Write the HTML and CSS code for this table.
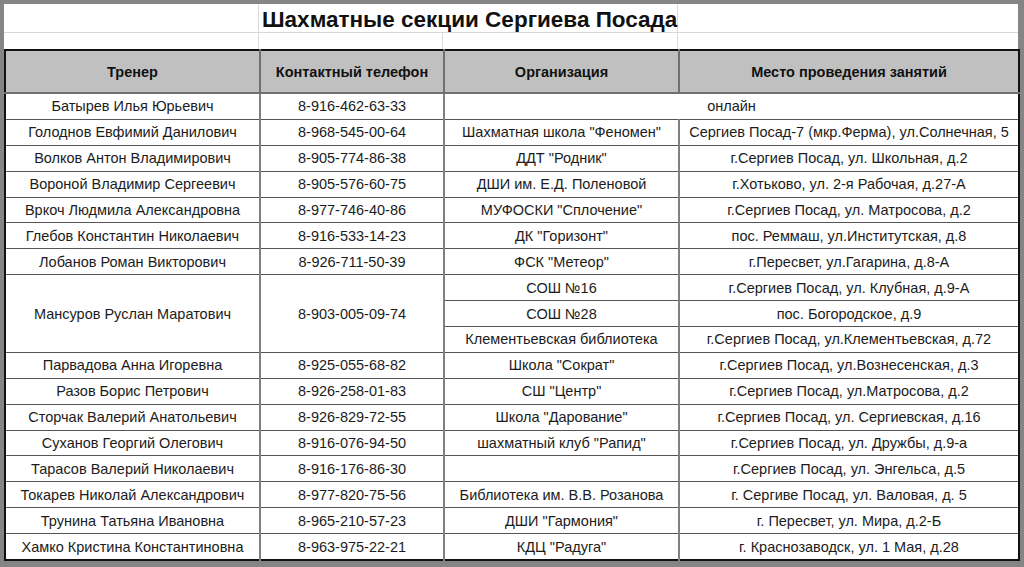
FILE: index.html
```html
<!DOCTYPE html>
<html lang="ru">
<head>
<meta charset="utf-8">
<title>Шахматные секции Сергиева Посада</title>
<link rel="stylesheet" href="styles.css">
</head>
<body>
<div class="frame">
  <div class="sheet">
    <div class="top">
      <div class="tcell a"></div>
      <div class="tcell title">Шахматные секции Сергиева Посада</div>
      <div class="tcell d"></div>
      <div class="gcell a"></div>
      <div class="gcell b"></div>
      <div class="gcell c"></div>
      <div class="gcell d"></div>
    </div>
    <table class="grid">
      <colgroup>
        <col class="w1"><col class="w2"><col class="w3"><col class="w4">
      </colgroup>
      <thead>
        <tr><th>Тренер</th><th>Контактный телефон</th><th>Организация</th><th>Место проведения занятий</th></tr>
      </thead>
      <tbody>
        <tr><td>Батырев Илья Юрьевич</td><td>8-916-462-63-33</td><td colspan="2">онлайн</td></tr>
        <tr><td>Голоднов Евфимий Данилович</td><td>8-968-545-00-64</td><td>Шахматная школа "Феномен"</td><td>Сергиев Посад-7 (мкр.Ферма), ул.Солнечная, 5</td></tr>
        <tr><td>Волков Антон Владимирович</td><td>8-905-774-86-38</td><td>ДДТ "Родник"</td><td>г.Сергиев Посад, ул. Школьная, д.2</td></tr>
        <tr><td>Вороной Владимир Сергеевич</td><td>8-905-576-60-75</td><td>ДШИ им. Е.Д. Поленовой</td><td>г.Хотьково, ул. 2-я Рабочая, д.27-А</td></tr>
        <tr><td>Вркоч Людмила Александровна</td><td>8-977-746-40-86</td><td>МУФОСКИ "Сплочение"</td><td>г.Сергиев Посад, ул. Матросова, д.2</td></tr>
        <tr><td>Глебов Константин Николаевич</td><td>8-916-533-14-23</td><td>ДК "Горизонт"</td><td>пос. Реммаш, ул.Институтская, д.8</td></tr>
        <tr><td>Лобанов Роман Викторович</td><td>8-926-711-50-39</td><td>ФСК "Метеор"</td><td>г.Пересвет, ул.Гагарина, д.8-А</td></tr>
        <tr><td rowspan="3">Мансуров Руслан Маратович</td><td rowspan="3">8-903-005-09-74</td><td>СОШ №16</td><td>г.Сергиев Посад, ул. Клубная, д.9-А</td></tr>
        <tr><td>СОШ №28</td><td>пос. Богородское, д.9</td></tr>
        <tr><td>Клементьевская библиотека</td><td>г.Сергиев Посад, ул.Клементьевская, д.72</td></tr>
        <tr><td>Парвадова Анна Игоревна</td><td>8-925-055-68-82</td><td>Школа "Сократ"</td><td>г.Сергиев Посад, ул.Вознесенская, д.3</td></tr>
        <tr><td>Разов Борис Петрович</td><td>8-926-258-01-83</td><td>СШ "Центр"</td><td>г.Сергиев Посад, ул.Матросова, д.2</td></tr>
        <tr><td>Сторчак Валерий Анатольевич</td><td>8-926-829-72-55</td><td>Школа "Дарование"</td><td>г.Сергиев Посад, ул. Сергиевская, д.16</td></tr>
        <tr><td>Суханов Георгий Олегович</td><td>8-916-076-94-50</td><td>шахматный клуб "Рапид"</td><td>г.Сергиев Посад, ул. Дружбы, д.9-а</td></tr>
        <tr><td>Тарасов Валерий Николаевич</td><td>8-916-176-86-30</td><td></td><td>г.Сергиев Посад, ул. Энгельса, д.5</td></tr>
        <tr><td>Токарев Николай Александрович</td><td>8-977-820-75-56</td><td>Библиотека им. В.В. Розанова</td><td>г. Сергиве Посад, ул. Валовая, д. 5</td></tr>
        <tr><td>Трунина Татьяна Ивановна</td><td>8-965-210-57-23</td><td>ДШИ "Гармония"</td><td>г. Пересвет, ул. Мира, д.2-Б</td></tr>
        <tr><td>Хамко Кристина Константиновна</td><td>8-963-975-22-21</td><td>КДЦ "Радуга"</td><td>г. Краснозаводск, ул. 1 Мая, д.28</td></tr>
      </tbody>
    </table>
  </div>
</div>
</body>
</html>
```

FILE: styles.css
```css
html, body {
  margin: 0;
  padding: 0;
  background: #858585;
}
.frame {
  width: 1024px;
  height: 567px;
  box-sizing: border-box;
  padding: 4px 6px 6px 4px;
  background: #858585;
}
.sheet {
  background: #ffffff;
  height: 557px;
  font-family: "Liberation Sans", Arial, sans-serif;
  color: #1c1c1c;
}
.top {
  display: grid;
  grid-template-columns: 255px 184px 235px 1fr;
  grid-template-rows: 29px 16px;
}
.tcell {
  border-bottom: 1px solid #d8d8d8;
  border-right: 1px solid #dcdcdc;
}
.tcell.d { border-right: none; }
.tcell.title {
  grid-column: span 2;
  font-weight: bold;
  font-size: 22.5px;
  line-height: 31px;
  text-align: left;
  padding-left: 3px;
  color: #111;
  white-space: nowrap;
}
.gcell {
  border-right: 1px solid #dcdcdc;
}
.gcell.d { border-right: none; }
.grid {
  border-collapse: collapse;
  table-layout: fixed;
  width: 1014px;
  border: 2px solid #111;
  font-size: 14.5px;
}
.w1 { width: 255px; }
.w2 { width: 184px; }
.w3 { width: 235px; }
.w4 { width: 340px; }
.grid th {
  background: #c0c0c0;
  font-weight: bold;
  font-size: 14.5px;
  height: 41px;
  padding: 0;
  text-align: center;
  border-left: 2px solid #707070;
  border-bottom: 2px solid #707070;
  color: #111;
}
.grid td {
  height: 24.9px;
  padding: 0;
  text-align: center;
  white-space: nowrap;
  border-left: 2px solid #808080;
  border-top: 1px solid #555;
}
.grid th:first-child, .grid tr > td:first-child[rowspan], .grid tbody tr:not(:nth-child(9)):not(:nth-child(10)) > td:first-child {
  border-left: 2px solid #111;
}
```
